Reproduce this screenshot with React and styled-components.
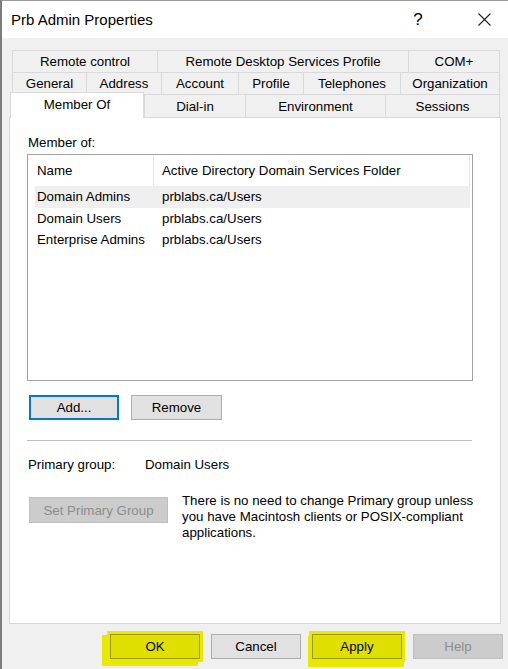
import React from 'react';
import styled, { createGlobalStyle, css } from 'styled-components';

const GlobalStyle = createGlobalStyle`
  html, body {
    margin: 0;
    padding: 0;
    background: #f0f0f0;
  }
  * {
    box-sizing: border-box;
  }
`;

const FONT = `"Liberation Sans", Arial, sans-serif`;

const Window = styled.div`
  width: 508px;
  height: 669px;
  display: flex;
  flex-direction: column;
  background: #f0f0f0;
  border-left: 2px solid #7c7c7c;
  border-top: 1px solid #9a9a9a;
  font-family: ${FONT};
  font-size: 13.3px;
  color: #000;
  overflow: hidden;
`;

const TitleBar = styled.div`
  height: 37px;
  display: flex;
  align-items: center;
  background: #fff;
  padding-left: 9px;
`;

const Title = styled.div`
  flex: 1;
  font-size: 15px;
  color: #000;
`;

const HelpGlyph = styled.span`
  width: 20px;
  text-align: center;
  font-size: 17px;
  margin-right: 44px;
`;

const CloseBox = styled.div`
  width: 24px;
  height: 24px;
  display: flex;
  align-items: center;
  justify-content: center;
  margin-right: 12px;
`;

const Body = styled.div`
  flex: 1;
  display: flex;
  flex-direction: column;
  padding: 12px 0 0 10px;
`;

const TabStrip = styled.div`
  width: 488px;
  display: flex;
  flex-direction: column;
`;

const TabRow = styled.div`
  display: flex;
  height: ${(p) => p.$h}px;
`;

const Tab = styled.div`
  width: ${(p) => p.$w}px;
  height: 100%;
  display: flex;
  align-items: center;
  justify-content: center;
  background: #f0f0f0;
  border-top: 1px solid #d9d9d9;
  border-left: 1px solid #d9d9d9;
  white-space: nowrap;
  &:last-child {
    border-right: 1px solid #d9d9d9;
  }
  ${(p) =>
    p.$active &&
    css`
      position: relative;
      z-index: 2;
      background: #fff;
      margin: -2px 0 0 -2px;
      height: calc(100% + 3px);
      border-right: 1px solid #d9d9d9;
      padding-bottom: 3px;
    `}
`;

const Panel = styled.div`
  width: 492px;
  height: 507px;
  margin-left: -3px;
  background: #fff;
  border: 1px solid #d6d6d6;
  display: flex;
  flex-direction: column;
`;

const Label = styled.div`
  line-height: 17px;
  margin: ${(p) => p.$mt || 0}px 0 0 18px;
`;

const ListBox = styled.div`
  width: 446px;
  height: 227px;
  margin: 3px 0 0 17px;
  border: 1px solid #a3a3a3;
  background: #fff;
`;

const ListHeader = styled.div`
  height: 31px;
  display: flex;
  padding-left: 7px;
`;

const HeadCell = styled.div`
  width: ${(p) => p.$w}px;
  display: flex;
  align-items: center;
  padding-left: ${(p) => p.$pl}px;
  border-right: 1px solid #e5e5e5;
  white-space: nowrap;
`;

const ListRow = styled.div`
  width: 442px;
  height: 21.5px;
  padding-left: 7px;
  display: flex;
`;

const RowInner = styled.div`
  width: 435px;
  display: flex;
  align-items: center;
  background: ${(p) => (p.$selected ? '#efefef' : 'transparent')};
`;

const Cell = styled.div`
  width: ${(p) => p.$w}px;
  padding-left: ${(p) => p.$pl}px;
  white-space: nowrap;
`;

const ButtonRow = styled.div`
  display: flex;
  gap: 12px;
  margin: 14px 0 0 19px;
`;

const Button = styled.button`
  width: ${(p) => p.$w || 90}px;
  height: ${(p) => p.$h || 25}px;
  font-family: ${FONT};
  font-size: 13.3px;
  color: #000;
  background: #e1e1e1;
  border: 1px solid #adadad;
  padding: 0;
  ${(p) =>
    p.$focused &&
    css`
      border: 2px solid #0078d7;
    `}
  ${(p) =>
    p.disabled &&
    css`
      background: #cccccc;
      border-color: #bfbfbf;
      color: #8d8d8d;
    `}
  ${(p) =>
    p.$mark &&
    css`
      background: #e0e000;
      border-color: #9a9a10;
      box-shadow: 0 0 0 3px #e8e800, ${p.$mark} 0 3px #e8e800;
    `}
`;

const Separator = styled.div`
  width: 445px;
  height: 1px;
  margin: 20px 0 0 17px;
  background: #bdbdbd;
`;

const InfoRow = styled.div`
  display: flex;
  line-height: 17px;
  margin: 15px 0 0 18px;
`;

const InfoKey = styled.div`
  width: 117px;
`;

const SetRow = styled.div`
  display: flex;
  align-items: flex-start;
  gap: 14px;
  margin: 24px 0 0 19px;
`;

const Note = styled.div`
  width: 300px;
  line-height: 16px;
  margin-top: -4px;
`;

const Footer = styled.div`
  display: flex;
  justify-content: flex-end;
  gap: 11px;
  margin-top: 10px;
  padding-right: 5px;
`;

const tabRows = [
  { h: 22, tabs: [['Remote control', 145], ['Remote Desktop Services Profile', 251], ['COM+', 92]] },
  {
    h: 22,
    tabs: [
      ['General', 74],
      ['Address', 75],
      ['Account', 77],
      ['Profile', 65],
      ['Telephones', 97],
      ['Organization', 100],
    ],
  },
  { h: 23, tabs: [['Member Of', 134, true], ['Dial-in', 101], ['Environment', 140], ['Sessions', 115]] },
];

const groups = [
  { name: 'Domain Admins', folder: 'prblabs.ca/Users', selected: true },
  { name: 'Domain Users', folder: 'prblabs.ca/Users' },
  { name: 'Enterprise Admins', folder: 'prblabs.ca/Users' },
];

const App = () => {
  return (
    <>
      <GlobalStyle />
      <Window>
        <TitleBar>
          <Title>Prb Admin Properties</Title>
          <HelpGlyph>?</HelpGlyph>
          <CloseBox>
            <svg width="13" height="13" viewBox="0 0 13 13">
              <path d="M0.5 0.5 L12.5 12.5 M12.5 0.5 L0.5 12.5" stroke="#222" strokeWidth="1.1" />
            </svg>
          </CloseBox>
        </TitleBar>

        <Body>
          <TabStrip>
            {tabRows.map((row, i) => (
              <TabRow key={i} $h={row.h}>
                {row.tabs.map(([label, w, active]) => (
                  <Tab key={label} $w={w} $active={active}>
                    {label}
                  </Tab>
                ))}
              </TabRow>
            ))}
          </TabStrip>

          <Panel>
            <Label $mt={16}>Member of:</Label>
            <ListBox>
              <ListHeader>
                <HeadCell $w={119} $pl={2}>Name</HeadCell>
                <HeadCell $w={316} $pl={8}>Active Directory Domain Services Folder</HeadCell>
              </ListHeader>
              {groups.map((g) => (
                <ListRow key={g.name}>
                  <RowInner $selected={g.selected}>
                    <Cell $w={119} $pl={2}>{g.name}</Cell>
                    <Cell $w={316} $pl={8}>{g.folder}</Cell>
                  </RowInner>
                </ListRow>
              ))}
            </ListBox>

            <ButtonRow>
              <Button $focused>Add...</Button>
              <Button $w={91}>Remove</Button>
            </ButtonRow>

            <Separator />

            <InfoRow>
              <InfoKey>Primary group:</InfoKey>
              <div>Domain Users</div>
            </InfoRow>

            <SetRow>
              <Button $w={139} $h={26} disabled>
                Set Primary Group
              </Button>
              <Note>
                There is no need to change Primary group unless you have Macintosh clients or
                POSIX-compliant applications.
              </Note>
            </SetRow>
          </Panel>

          <Footer>
            <Button $mark="-5px 4px">OK</Button>
            <Button>Cancel</Button>
            <Button $mark="-1px 5px">Apply</Button>
            <Button disabled>Help</Button>
          </Footer>
        </Body>
      </Window>
    </>
  );
};

export default App;
